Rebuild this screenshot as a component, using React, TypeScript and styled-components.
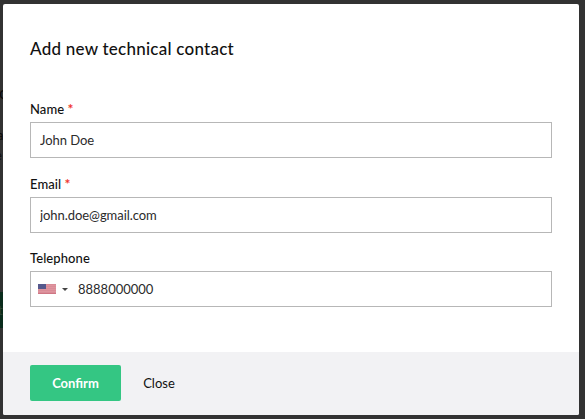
import React from 'react';
import styled, { createGlobalStyle } from 'styled-components';

const GlobalStyle = createGlobalStyle`
  * { box-sizing: border-box; }
  body { margin: 0; background: #fff; font-family: Lato, 'Liberation Sans', sans-serif; color: #111; overflow: hidden; }
`;

const Backdrop = styled.div`
  position: relative;
  width: 585px;
  height: 419px;
  padding: 4px 6px 4px 3px;
  background: #323232;
  overflow: hidden;
`;

const PageText = styled.span<{ $top: number; $size: number; $left: number }>`
  position: absolute;
  left: ${p => p.$left}px;
  top: ${p => p.$top}px;
  font-size: ${p => p.$size}px;
  line-height: 1;
  color: #0c0c0c;
`;

const PageButton = styled.div`
  position: absolute;
  left: 0;
  top: 292px;
  width: 12px;
  height: 36px;
  padding-left: 0;
  background: #0a2c1c;
  color: #2c4438;
  font-size: 13px;
  line-height: 36px;
  text-indent: -2px;
`;

const Dialog = styled.form`
  position: relative;
  display: flex;
  flex-direction: column;
  width: 576px;
  height: 411px;
  background: #fff;
  border-radius: 2px;
  overflow: hidden;
`;

const Body = styled.div`
  flex: 1;
  padding: 33px 27px 0;
`;

const Title = styled.h1`
  margin: 0 0 48px;
  font-size: 17px;
  line-height: 24px;
  font-weight: 500;
  letter-spacing: 0.24px;
`;

const Field = styled.div`
  height: 74.5px;
`;

const Label = styled.label`
  display: block;
  height: 13px;
  line-height: 0;
  font-size: 13px;
  font-weight: 500;
  letter-spacing: 0.08px;
`;

const Required = styled.span`
  color: #f0352f;
  font-size: 14px;
  font-weight: 700;
`;

const InputBox = styled.div`
  display: flex;
  align-items: center;
  height: 36px;
  border: 1px solid #b7b7b7;
  background: #fff;
`;

const Input = styled.input<{ $inset: number }>`
  flex: 1;
  min-width: 0;
  height: 34px;
  padding: 0 0 0 ${p => p.$inset}px;
  border: 0;
  outline: 0;
  background: transparent;
  color: #2b2b2b;
  font: 400 13px Lato, 'Liberation Sans', sans-serif;
  letter-spacing: -0.06px;
`;

const PhoneInput = styled(Input)`
  letter-spacing: 0;
`;

const Country = styled.div`
  display: flex;
  align-items: center;
  gap: 6px;
  padding-left: 7px;
`;

const Caret = styled.span`
  border: 3px solid transparent;
  border-top: 3px solid #444;
  border-bottom: 0;
`;

const Footer = styled.div`
  display: flex;
  align-items: center;
  height: 63px;
  padding: 0 27px 1px;
  background: #f2f2f4;
`;

const Button = styled.button<{ $primary?: boolean }>`
  width: ${p => (p.$primary ? 91 : 76)}px;
  height: 36px;
  padding: 0;
  border: 0;
  border-radius: 2px;
  background: ${p => (p.$primary ? '#34c683' : 'transparent')};
  color: ${p => (p.$primary ? '#fff' : '#111')};
  font: ${p => (p.$primary ? 700 : 400)} 13px Lato, 'Liberation Sans', sans-serif;
`;

const Flag = () => (
  <svg width="18" height="10" viewBox="0 0 18 10" shapeRendering="crispEdges">
    <rect width="18" height="10" fill="#d98c97" />
    {[1, 3, 5, 7].map(y => <rect key={y} y={y} width="18" height="1" fill="#df949e" />)}
    <rect y="9" width="18" height="1" fill="#cf7684" />
    <rect width="8" height="5" fill="#55588c" />
  </svg>
);

export default function App() {
  return (
    <>
      <GlobalStyle />
      <Backdrop>
        <PageText $top={84} $left={-1} $size={17}>o</PageText>
        <PageText $top={129} $left={-3} $size={13}>a</PageText>
        <PageText $top={149} $left={-5} $size={13}>e</PageText>
        <PageButton>t</PageButton>
        <Dialog>
          <Body>
            <Title>Add new technical contact</Title>
            <Field>
              <Label>Name <Required>*</Required></Label>
              <InputBox><Input $inset={9} defaultValue="John Doe" /></InputBox>
            </Field>
            <Field>
              <Label>Email <Required>*</Required></Label>
              <InputBox><Input $inset={9} defaultValue="john.doe@gmail.com" /></InputBox>
            </Field>
            <Field>
              <Label>Telephone</Label>
              <InputBox>
                <Country><Flag /><Caret /></Country>
                <PhoneInput $inset={10} defaultValue="8888000000" />
              </InputBox>
            </Field>
          </Body>
          <Footer>
            <Button type="button" $primary>Confirm</Button>
            <Button type="button">Close</Button>
          </Footer>
        </Dialog>
      </Backdrop>
    </>
  );
}
